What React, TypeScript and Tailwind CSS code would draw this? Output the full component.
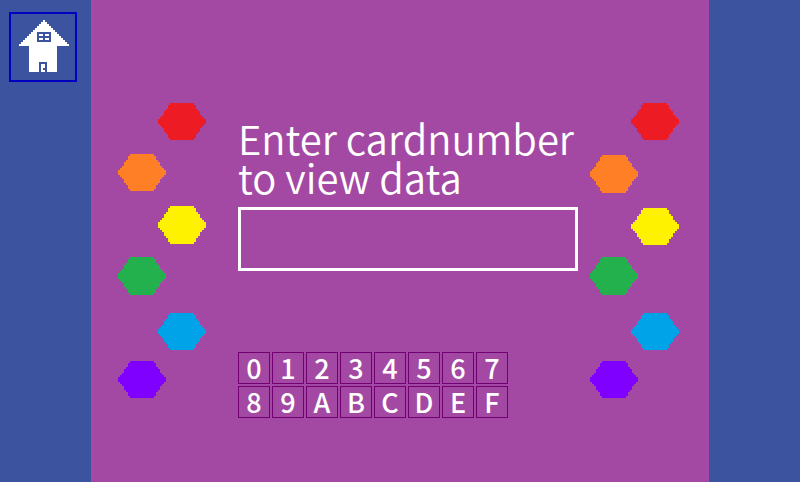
import { useState } from "react";

const KEYS = [..."0123456789ABCDEF"];

function HomeIcon() {
  // Drawn on a 25 x 26 grid of square dots
  const roof = Array.from({ length: 13 }, (_, i) => i);
  return (
    <svg viewBox="0 0 25 26" className="h-[52px] w-[50px]" shapeRendering="crispEdges" aria-hidden="true">
      <g fill="#ffffff">
        {roof.map((i) => (
          <rect key={i} x={12 - i} y={i} width={2 * i + 1} height={1} />
        ))}
        <rect x={5} y={13} width={14} height={13} />
      </g>
      <rect x={9} y={6} width={7} height={5} fill="#3c53a0" />
      <path d="M10 7h2v1h-2zM13 7h2v1h-2zM10 9h2v1h-2zM13 9h2v1h-2z" fill="#ffffff" />
      <rect x={10} y={21} width={4} height={5} fill="#3c53a0" />
      <path d="M11 22h2v2h-1v1h1v1h-2z" fill="#ffffff" />
    </svg>
  );
}

function Hexagon({ className }: { className: string }) {
  return (
    <svg
      viewBox="0 0 24 19"
      preserveAspectRatio="none"
      shapeRendering="crispEdges"
      className={`w-12 shrink-0 ${className}`}
      aria-hidden="true"
    >
      <path
        d="M6 0h12v1h1v2h1v1h1v2h1v1h1v1h1v3h-1v1h-1v1h-1v2h-1v1h-1v2h-1v1H6v-1H5v-2H4v-1H3v-2H2v-1H1v-1H0V8h1V7h1V6h1V4h1V3h1V1h1z"
        fill="currentColor"
      />
    </svg>
  );
}

export default function App() {
  const [card, setCard] = useState("");

  return (
    <div className="flex min-h-screen bg-[#a349a4] font-['Noto_Sans_CJK_SC','Noto_Sans',sans-serif] text-white">
      <nav className="w-[91px] shrink-0 bg-[#3c53a0] pt-3 pl-[9px]">
        <button
          type="button"
          aria-label="Home"
          className="flex h-[70px] w-[68px] items-start border-2 border-[#0000c0] pt-1.5 pl-2"
        >
          <HomeIcon />
        </button>
      </nav>

      <main className="flex min-w-0 flex-1 items-start pr-[30px] pl-[27px]">
        <div className="flex w-[88px] shrink-0 flex-col pt-[103px]">
          <Hexagon className="h-[37px] self-end text-[#ed1c24]" />
          <Hexagon className="mt-[14px] h-[37px] text-[#ff7f27]" />
          <Hexagon className="mt-[15px] h-[38px] self-end text-[#fff200]" />
          <Hexagon className="mt-[13px] h-[38px] text-[#22b14c]" />
          <Hexagon className="mt-[18px] h-[37px] self-end text-[#00a2e8]" />
          <Hexagon className="mt-[11px] h-[37px] text-[#7f00ff]" />
        </div>

        <form className="flex min-w-0 flex-1 flex-col pt-[119px] pr-3 pl-8" onSubmit={(e) => e.preventDefault()}>
          <label htmlFor="card" className="text-[40px] leading-[39px] font-[350] whitespace-nowrap">
            Enter cardnumber
            <br />
            to view data
          </label>
          <input
            id="card"
            type="text"
            value={card}
            onChange={(e) => setCard(e.target.value)}
            className="mt-[10px] h-16 w-full border-[3px] border-white bg-transparent px-3 text-[40px] font-[350] outline-none"
          />
          <div className="mt-[81px] grid w-fit grid-cols-8 gap-0.5">
            {KEYS.map((k) => (
              <button
                key={k}
                type="button"
                onClick={() => setCard(card + k)}
                className="flex size-8 items-center justify-center border border-[#720072] text-[27px] leading-[30px] font-medium"
              >
                {k}
              </button>
            ))}
          </div>
        </form>

        <div className="flex w-[89px] shrink-0 flex-col pt-[103px]">
          <Hexagon className="h-[37px] self-end text-[#ed1c24]" />
          <Hexagon className="mt-[15px] h-[38px] text-[#ff7f27]" />
          <Hexagon className="mt-[15px] h-[37px] self-end text-[#fff200]" />
          <Hexagon className="mt-[12px] h-[38px] text-[#22b14c]" />
          <Hexagon className="mt-[18px] h-[37px] self-end text-[#00a2e8]" />
          <Hexagon className="mt-[11px] h-[37px] text-[#7f00ff]" />
        </div>
      </main>

      <div className="w-[91px] shrink-0 bg-[#3c53a0]" />
    </div>
  );
}
